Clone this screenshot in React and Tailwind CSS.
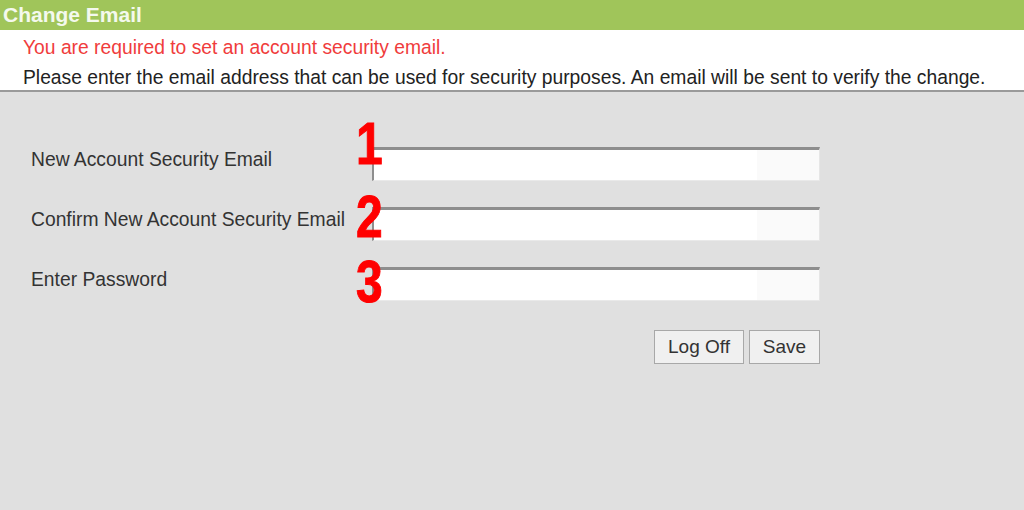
import React from "react";

function Field({ label }) {
  return (
    <div className="flex items-start h-[34px]">
      <div className="w-[341px] text-[19.3px] leading-[25px] text-[#333333] whitespace-nowrap">{label}</div>
      <div className="w-[448px] h-[34px] bg-[linear-gradient(to_right,#ffffff_0%,#ffffff_86%,#fafafa_86%,#fafafa_100%)] border-t-[3px] border-l-2 border-t-[#8e8e8e] border-l-[#8e8e8e] border-r border-b border-r-[#e6e6e6] border-b-[#e9e9e9]" />
    </div>
  );
}

function Digit({ n, top }) {
  return (
    <div
      className="absolute left-[356px] text-[#ff0000] font-black text-[60px] leading-none scale-x-[0.8] origin-left [-webkit-text-stroke:1px_#ff0000]"
      style={{ top }}
    >
      {n}
    </div>
  );
}

export default function App() {
  return (
    <div className="w-[1024px] h-[510px] bg-[#e0e0e0] relative overflow-hidden font-['Liberation_Sans',Arial,sans-serif]">
      <div className="h-[30px] bg-[#a0c55a] flex items-center pl-[3px]">
        <span className="text-[21px] font-bold text-[#f4f9ee]">Change Email</span>
      </div>
      <div className="bg-white pl-[23px] pt-[6px] h-[60px]">
        <div className="h-[24px] leading-[24px] text-[19.3px] text-[#f03c3c] whitespace-nowrap">
          You are required to set an account security email.
        </div>
        <div className="h-[24px] leading-[24px] mt-[6px] text-[19.3px] text-[#222222] whitespace-nowrap">
          Please enter the email address that can be used for security purposes. An email will be sent to verify the change.
        </div>
      </div>
      <div className="h-[2px] bg-[#9a9a9a]" />
      <div className="pl-[31px] pt-[55px] flex flex-col gap-[26px]">
        <Field label="New Account Security Email" />
        <Field label="Confirm New Account Security Email" />
        <Field label="Enter Password" />
      </div>
      <div className="w-[820px] flex justify-end gap-[5px] mt-[29px]">
        <button className="w-[90px] h-[34px] border border-[#a8a8a8] bg-[#f0f0f0] text-[19px] text-[#333333]">Log Off</button>
        <button className="w-[71px] h-[34px] border border-[#a8a8a8] bg-[#f0f0f0] text-[19px] text-[#333333]">Save</button>
      </div>
      <Digit n="1" top={114} />
      <Digit n="2" top={187} />
      <Digit n="3" top={252} />
    </div>
  );
}
